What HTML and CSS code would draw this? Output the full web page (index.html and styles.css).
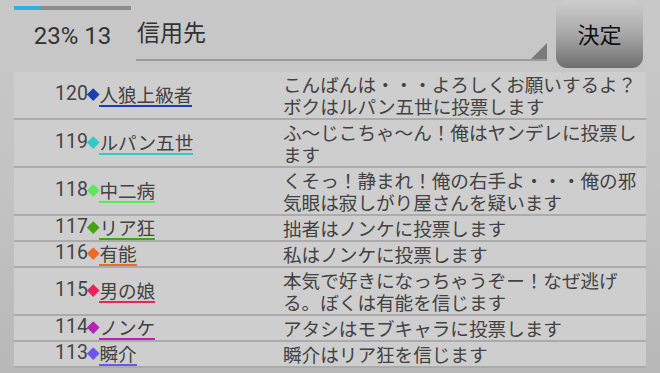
FILE: index.html
```html
<!DOCTYPE html>
<html lang="ja">
<head>
<meta charset="utf-8">
<link rel="stylesheet" href="styles.css">
</head>
<body>
<div class="top">
  <div class="status">
    <div class="progress"><div class="progress-fill" style="width:23%"></div></div>
    <div class="stat">23% 13</div>
  </div>
  <div class="spinner">
    <span class="spinner-text">信用先</span>
    <span class="spinner-tri"></span>
  </div>
  <button class="decide">決定</button>
</div>
<div class="panel">
  <div class="row">
    <div class="who"><span class="num">120</span><span class="dia c-blue"></span><span class="name c-blue">人狼上級者</span></div>
    <div class="msg">こんばんは・・・よろしくお願いするよ？ボクはルパン五世に投票します</div>
  </div>
  <div class="row">
    <div class="who"><span class="num">119</span><span class="dia c-cyan"></span><span class="name c-cyan">ルパン五世</span></div>
    <div class="msg">ふ〜じこちゃ〜ん！俺はヤンデレに投票します</div>
  </div>
  <div class="row">
    <div class="who"><span class="num">118</span><span class="dia c-lime"></span><span class="name c-lime">中二病</span></div>
    <div class="msg">くそっ！静まれ！俺の右手よ・・・俺の邪気眼は寂しがり屋さんを疑います</div>
  </div>
  <div class="row">
    <div class="who"><span class="num">117</span><span class="dia c-green"></span><span class="name c-green">リア狂</span></div>
    <div class="msg">拙者はノンケに投票します</div>
  </div>
  <div class="row">
    <div class="who"><span class="num">116</span><span class="dia c-orange"></span><span class="name c-orange">有能</span></div>
    <div class="msg">私はノンケに投票します</div>
  </div>
  <div class="row">
    <div class="who"><span class="num">115</span><span class="dia c-pink"></span><span class="name c-pink">男の娘</span></div>
    <div class="msg">本気で好きになっちゃうぞー！なぜ逃げる。ぼくは有能を信じます</div>
  </div>
  <div class="row">
    <div class="who"><span class="num">114</span><span class="dia c-magenta"></span><span class="name c-magenta">ノンケ</span></div>
    <div class="msg">アタシはモブキャラに投票します</div>
  </div>
  <div class="row">
    <div class="who"><span class="num">113</span><span class="dia c-violet"></span><span class="name c-violet">瞬介</span></div>
    <div class="msg">瞬介はリア狂を信じます</div>
  </div>
</div>
</body>
</html>
```
FILE: styles.css
```css
html, body {
  margin: 0;
  padding: 0;
}
body {
  width: 660px;
  height: 373px;
  overflow: hidden;
  background: linear-gradient(to bottom, #c8c8c8 0%, #c4c4c4 45%, #b8b8b8 100%);
  font-family: "Roboto", "Noto Sans CJK JP", sans-serif;
  color: #424242;
}
.top {
  display: flex;
  height: 72px;
  padding-left: 14px;
  box-sizing: border-box;
}
.status {
  width: 117px;
  display: flex;
  flex-direction: column;
}
.progress {
  margin-top: 6px;
  height: 4px;
  background: #8c8c8c;
}
.progress-fill {
  height: 100%;
  background: #35aee0;
}
.stat {
  margin-top: 12px;
  font-size: 24px;
  line-height: 28px;
  text-align: center;
  color: #333;
}
.spinner {
  margin-left: 5px;
  width: 411px;
  height: 61px;
  box-sizing: border-box;
  border-bottom: 2px solid #9a9a9a;
  display: flex;
  align-items: flex-start;
  justify-content: space-between;
}
.spinner-text {
  margin-top: 15px;
  margin-left: 1px;
  font-family: "Noto Sans CJK JP", sans-serif;
  font-size: 23px;
  line-height: 32px;
  color: #333;
}
.spinner-tri {
  align-self: flex-end;
  width: 0;
  height: 0;
  border-left: 16px solid transparent;
  border-bottom: 16px solid #7a7a7a;
}
.decide {
  margin-left: 9px;
  width: 87px;
  height: 68px;
  border: none;
  border-radius: 11px;
  background: linear-gradient(to bottom, #cdcdcd 0%, #a8a8a8 50%, #6e6e6e 100%);
  font-family: "Noto Sans CJK JP", sans-serif;
  font-size: 22px;
  color: #111;
  padding: 0 0 2px 0;
}
.panel {
  margin: 0 14px;
  background: #cecece;
}
.row {
  display: flex;
  border-bottom: 2px solid #ababab;
  font-size: 18.6px;
  line-height: 22px;
}
.who {
  width: 269px;
  flex: none;
  box-sizing: border-box;
  padding-left: 41px;
  display: flex;
  align-items: center;
}
.num {
  font-size: 19.5px;
  color: #444;
  margin-bottom: 2px;
}
.dia {
  width: 8.5px;
  height: 8.5px;
  margin: 0 1.5px 2px 1.5px;
  transform: rotate(45deg);
}
.name {
  font-family: "Noto Sans CJK JP", sans-serif;
  border-bottom: 2px solid;
  color: #424242;
}
.msg {
  flex: 1;
  padding: 1px 0;
  font-family: "Noto Sans CJK JP", sans-serif;
}
.dia.c-blue { background: #1c3fae; }
.name.c-blue { border-color: #1c3fae; }
.dia.c-cyan { background: #33c9c6; }
.name.c-cyan { border-color: #33c9c6; }
.dia.c-lime { background: #5be85b; }
.name.c-lime { border-color: #5be85b; }
.dia.c-green { background: #44a514; }
.name.c-green { border-color: #44a514; }
.dia.c-orange { background: #ec6a2a; }
.name.c-orange { border-color: #ec6a2a; }
.dia.c-pink { background: #ea2458; }
.name.c-pink { border-color: #ea2458; }
.dia.c-magenta { background: #b722b7; }
.name.c-magenta { border-color: #b722b7; }
.dia.c-violet { background: #6a58ec; }
.name.c-violet { border-color: #6a58ec; }
```
